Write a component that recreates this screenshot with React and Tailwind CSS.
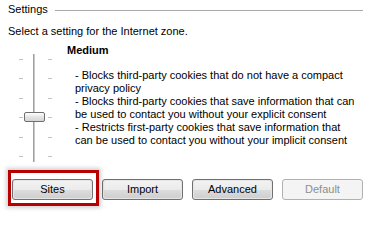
import React from 'react';

const lines = [
    '- Blocks third-party cookies that do not have a compact',
    'privacy policy',
    '- Blocks third-party cookies that save information that can',
    'be used to contact you without your explicit consent',
    '- Restricts first-party cookies that save information that',
    'can be used to contact you without your implicit consent',
];

function WinButton({ label, disabled }) {
    return (
        <div className={`w-[81px] h-[21px] rounded-[3px] border p-px ${disabled ? 'border-[#adb2b5] bg-[#f4f4f4]' : 'border-[#707070] bg-[#e6e6e6]'}`}>
            <div className={`h-full rounded-[2px] flex items-center justify-center ${disabled ? 'bg-[#f4f4f4] text-[#8d8d8d]' : 'bg-[linear-gradient(to_bottom,#f2f2f2_0%,#ebebeb_50%,#dddddd_51%,#cfcfcf_100%)] text-black'}`}>
                {label}
            </div>
        </div>
    );
}

function Slider() {
    const ticks = [0, 1, 2, 3, 4, 5];
    return (
        <div className="relative w-[33px] h-[108px] mt-[11px]">
            <div className="absolute left-[14px] top-0 w-[2px] h-full bg-[#c8c8c8] border-l border-[#a0a0a0]" />
            <div className="flex flex-col justify-between h-[98px] mt-[5px]">
                {ticks.map(t => (
                    <div key={t} className="flex justify-between">
                        <div className="w-[4px] h-px bg-[#c4c4c4]" />
                        <div className="w-[4px] h-px bg-[#c4c4c4]" />
                    </div>
                ))}
            </div>
            <div className="absolute left-[5px] top-[58px] w-[21px] h-[10px] rounded-[2px] border border-[#6f6f6f] bg-[linear-gradient(to_bottom,#ffffff,#e4e4e4_50%,#d6d6d6)]" />
        </div>
    );
}

export default function App() {
    return (
        <div className="w-[371px] h-[213px] bg-white overflow-hidden text-[11px] leading-[13px] text-black" style={{ fontFamily: '"Liberation Sans", Arial, sans-serif' }}>
            <div className="flex items-center pl-[8px] pr-[8px] pt-[3px]">
                <span>Settings</span>
                <div className="flex-1 h-px bg-[#a9a9a9] ml-[7px] mt-[1px]" />
            </div>
            <div className="pl-[8px] mt-[9px]">Select a setting for the Internet zone.</div>

            <div className="flex pl-[19px] mt-[5px]">
                <Slider />
                <div className="ml-[15px]">
                    <div className="font-bold mt-px">Medium</div>
                    <div className="pl-[8px] mt-[12px]">
                        {lines.map((l, i) => <div key={i}>{l}</div>)}
                    </div>
                </div>
            </div>

            <div className="relative flex gap-[9px] pl-[12px] mt-[17px]">
                <div className="absolute left-[8px] top-[-9px] w-[91px] h-[36px] border-[3px] border-[#b80000] shadow-[0_0_4px_2px_rgba(0,0,0,0.18)]" />
                <WinButton label="Sites" />
                <WinButton label="Import" />
                <WinButton label="Advanced" />
                <WinButton label="Default" disabled />
            </div>
        </div>
    );
}
